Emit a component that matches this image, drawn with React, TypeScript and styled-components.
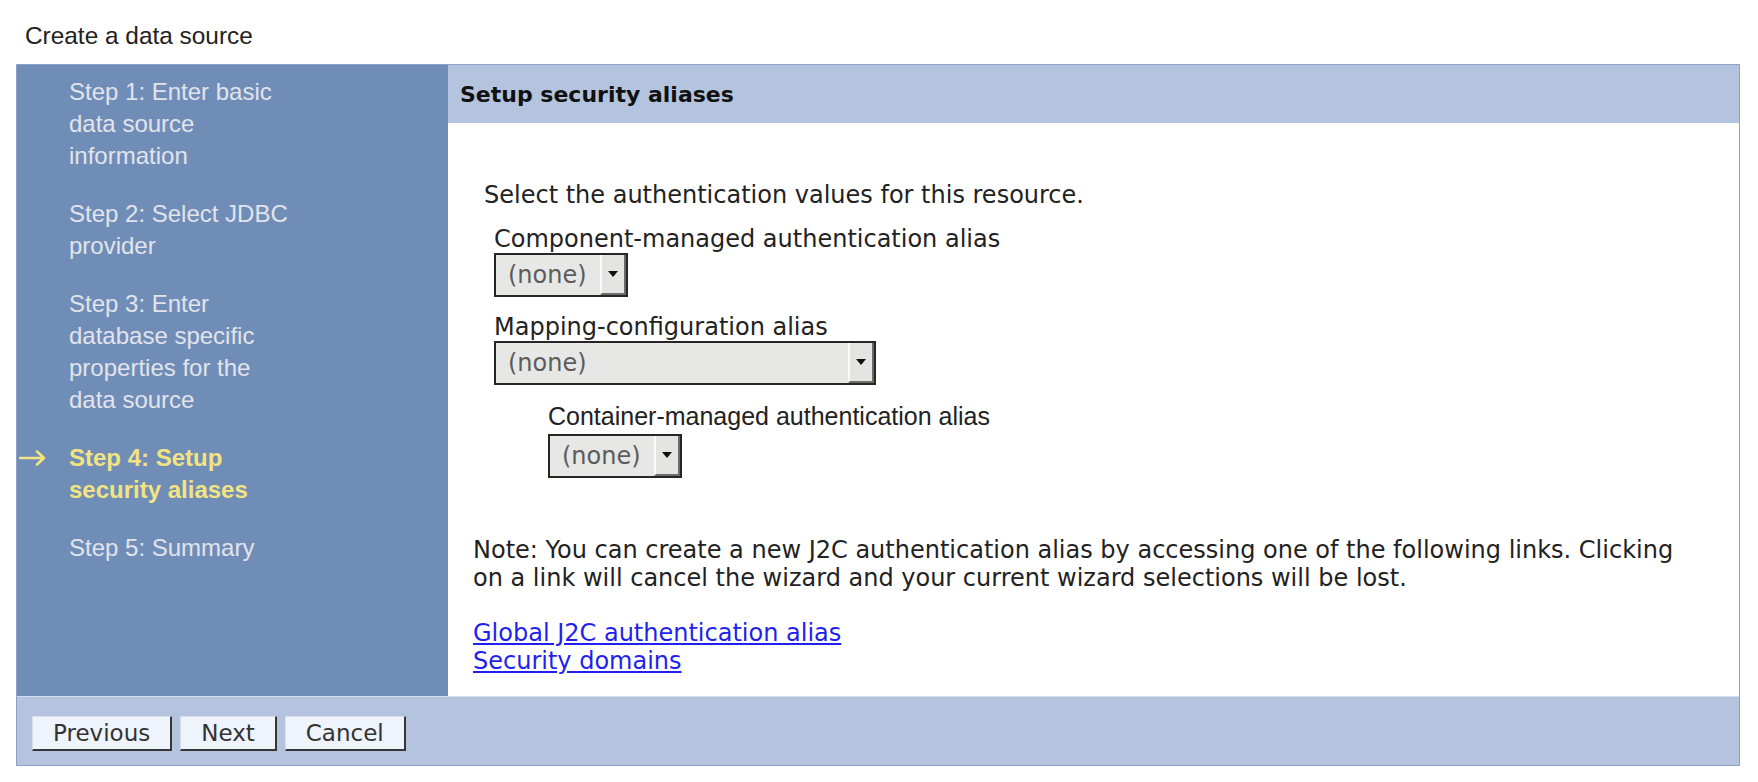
import React from 'react'
import styled, { createGlobalStyle } from 'styled-components'

const GlobalStyle = createGlobalStyle`
  html, body {
    margin: 0;
    padding: 0;
    background: #ffffff;
  }
`

const ARIAL = `'Liberation Sans', Arial, sans-serif`
const DEJAVU = `'DejaVu Sans', Verdana, sans-serif`

const Page = styled.div`
  padding: 22px 0 0 16px;
  width: 1724px;
`

const Title = styled.h1`
  margin: 0 0 14px 9px;
  font: normal 24.4px/28px ${ARIAL};
  color: #222222;
`

const Wizard = styled.div`
  box-sizing: border-box;
  width: 1724px;
  border: 1px solid #8aa2c9;
  display: grid;
  grid-template-columns: 431px 1fr;
  grid-template-rows: 631px auto;
`

const Sidebar = styled.nav`
  background: #708db8;
  padding: 11px 0 0 0;
`

const Step = styled.div`
  display: grid;
  grid-template-columns: 52px 226px;
  margin-bottom: 26px;
`

const Marker = styled.div`
  height: 32px;
  display: flex;
  align-items: center;
  padding-left: 2px;
`

const StepText = styled.div<{ $active?: boolean }>`
  font: ${({ $active }) => ($active ? 'bold' : 'normal')} 24px/32px ${ARIAL};
  color: ${({ $active }) => ($active ? '#f2e481' : '#e1e4eb')};
`

const Main = styled.section`
  display: flex;
  flex-direction: column;
  background: #ffffff;
  overflow: hidden;
`

const Header = styled.h2`
  margin: 0;
  box-sizing: border-box;
  height: 58px;
  padding: 2px 0 0 12px;
  background: #b4c4de;
  font: bold 22px/56px ${DEJAVU};
  color: #111111;
`

const Content = styled.div`
  padding: 58px 48px 18px 25px;
  font: normal 24px/28px ${DEJAVU};
  color: #222222;
`

const Intro = styled.p`
  margin: 0 0 16px 11px;
`

const Field = styled.div<{ $indent: number; $gap: number }>`
  margin: 0 0 ${({ $gap }) => $gap}px ${({ $indent }) => $indent}px;
`

const FieldLabel = styled.div<{ $arial?: boolean }>`
  font-family: ${({ $arial }) => ($arial ? ARIAL : DEJAVU)};
  font-size: ${({ $arial }) => ($arial ? 25 : 24)}px;
  line-height: 28px;
  margin-bottom: ${({ $arial }) => ($arial ? 4 : 0)}px;
`

const SelectBox = styled.div<{ $width: number }>`
  box-sizing: border-box;
  display: flex;
  width: ${({ $width }) => $width}px;
  height: 44px;
  border: 2px solid #262626;
  background: #e7e7e5;
`

const SelectValue = styled.span`
  flex: 1;
  display: flex;
  align-items: center;
  padding-left: 12px;
  color: #5c5c5c;
`

const SelectArrow = styled.span`
  box-sizing: border-box;
  width: 26px;
  border-left: 2px solid #fbfbfb;
  border-right: 2px solid #6b6b6b;
  border-bottom: 2px solid #6b6b6b;
  background: #e4e4e2;
  display: flex;
  align-items: center;
  justify-content: center;

  &::after {
    content: '';
    border-left: 5px solid transparent;
    border-right: 5px solid transparent;
    border-top: 6px solid #111111;
  }
`

const Note = styled.p`
  margin: 58px 0 27px 0;
  line-height: 28px;
`

const Links = styled.div`
  display: flex;
  flex-direction: column;
  align-items: flex-start;
  line-height: 28px;
`

const Link = styled.a`
  color: #1f1ff0;
  text-decoration: underline;
`

const Footer = styled.div`
  grid-column: 1 / -1;
  display: flex;
  gap: 8px;
  height: 69px;
  box-sizing: border-box;
  padding: 19px 0 0 15px;
  background: #b4c4de;
  border-top: 1px solid #d3ddec;
`

const Button = styled.button`
  height: 35px;
  box-sizing: border-box;
  padding: 0 20px;
  background: #eef3fc;
  border-style: solid;
  border-width: 1px 2px 2px 1px;
  border-color: #d9dde6 #363636 #363636 #d9dde6;
  font: normal 23px/1 ${DEJAVU};
  color: #333333;
`

const Arrow = () => (
  <svg width="28" height="18" viewBox="0 0 28 18" fill="none">
    <path
      d="M1 9 H25 M18 2.5 L25 9 L18 15.5"
      stroke="#f2e481"
      strokeWidth="2.6"
      strokeLinecap="round"
      strokeLinejoin="round"
    />
  </svg>
)

const steps = [
  'Step 1: Enter basic data source information',
  'Step 2: Select JDBC provider',
  'Step 3: Enter database specific properties for the data source',
  'Step 4: Setup security aliases',
  'Step 5: Summary',
]

const Select = ({ width }: { width: number }) => (
  <SelectBox $width={width}>
    <SelectValue>(none)</SelectValue>
    <SelectArrow />
  </SelectBox>
)

const App = () => (
  <Page>
    <GlobalStyle />
    <Title>Create a data source</Title>
    <Wizard>
      <Sidebar>
        {steps.map((s, i) => (
          <Step key={s}>
            <Marker>{i === 3 && <Arrow />}</Marker>
            <StepText $active={i === 3}>{s}</StepText>
          </Step>
        ))}
      </Sidebar>
      <Main>
        <Header>Setup security aliases</Header>
        <Content>
          <Intro>Select the authentication values for this resource.</Intro>
          <Field $indent={21} $gap={16}>
            <FieldLabel>Component-managed authentication alias</FieldLabel>
            <Select width={134} />
          </Field>
          <Field $indent={21} $gap={17}>
            <FieldLabel>Mapping-configuration alias</FieldLabel>
            <Select width={382} />
          </Field>
          <Field $indent={75} $gap={0}>
            <FieldLabel $arial>Container-managed authentication alias</FieldLabel>
            <Select width={134} />
          </Field>
          <Note>
            Note: You can create a new J2C authentication alias by accessing one
            of the following links. Clicking on a link will cancel the wizard and
            your current wizard selections will be lost.
          </Note>
          <Links>
            <Link href="#">Global J2C authentication alias</Link>
            <Link href="#">Security domains</Link>
          </Links>
        </Content>
      </Main>
      <Footer>
        <Button>Previous</Button>
        <Button>Next</Button>
        <Button>Cancel</Button>
      </Footer>
    </Wizard>
  </Page>
)

export default App
